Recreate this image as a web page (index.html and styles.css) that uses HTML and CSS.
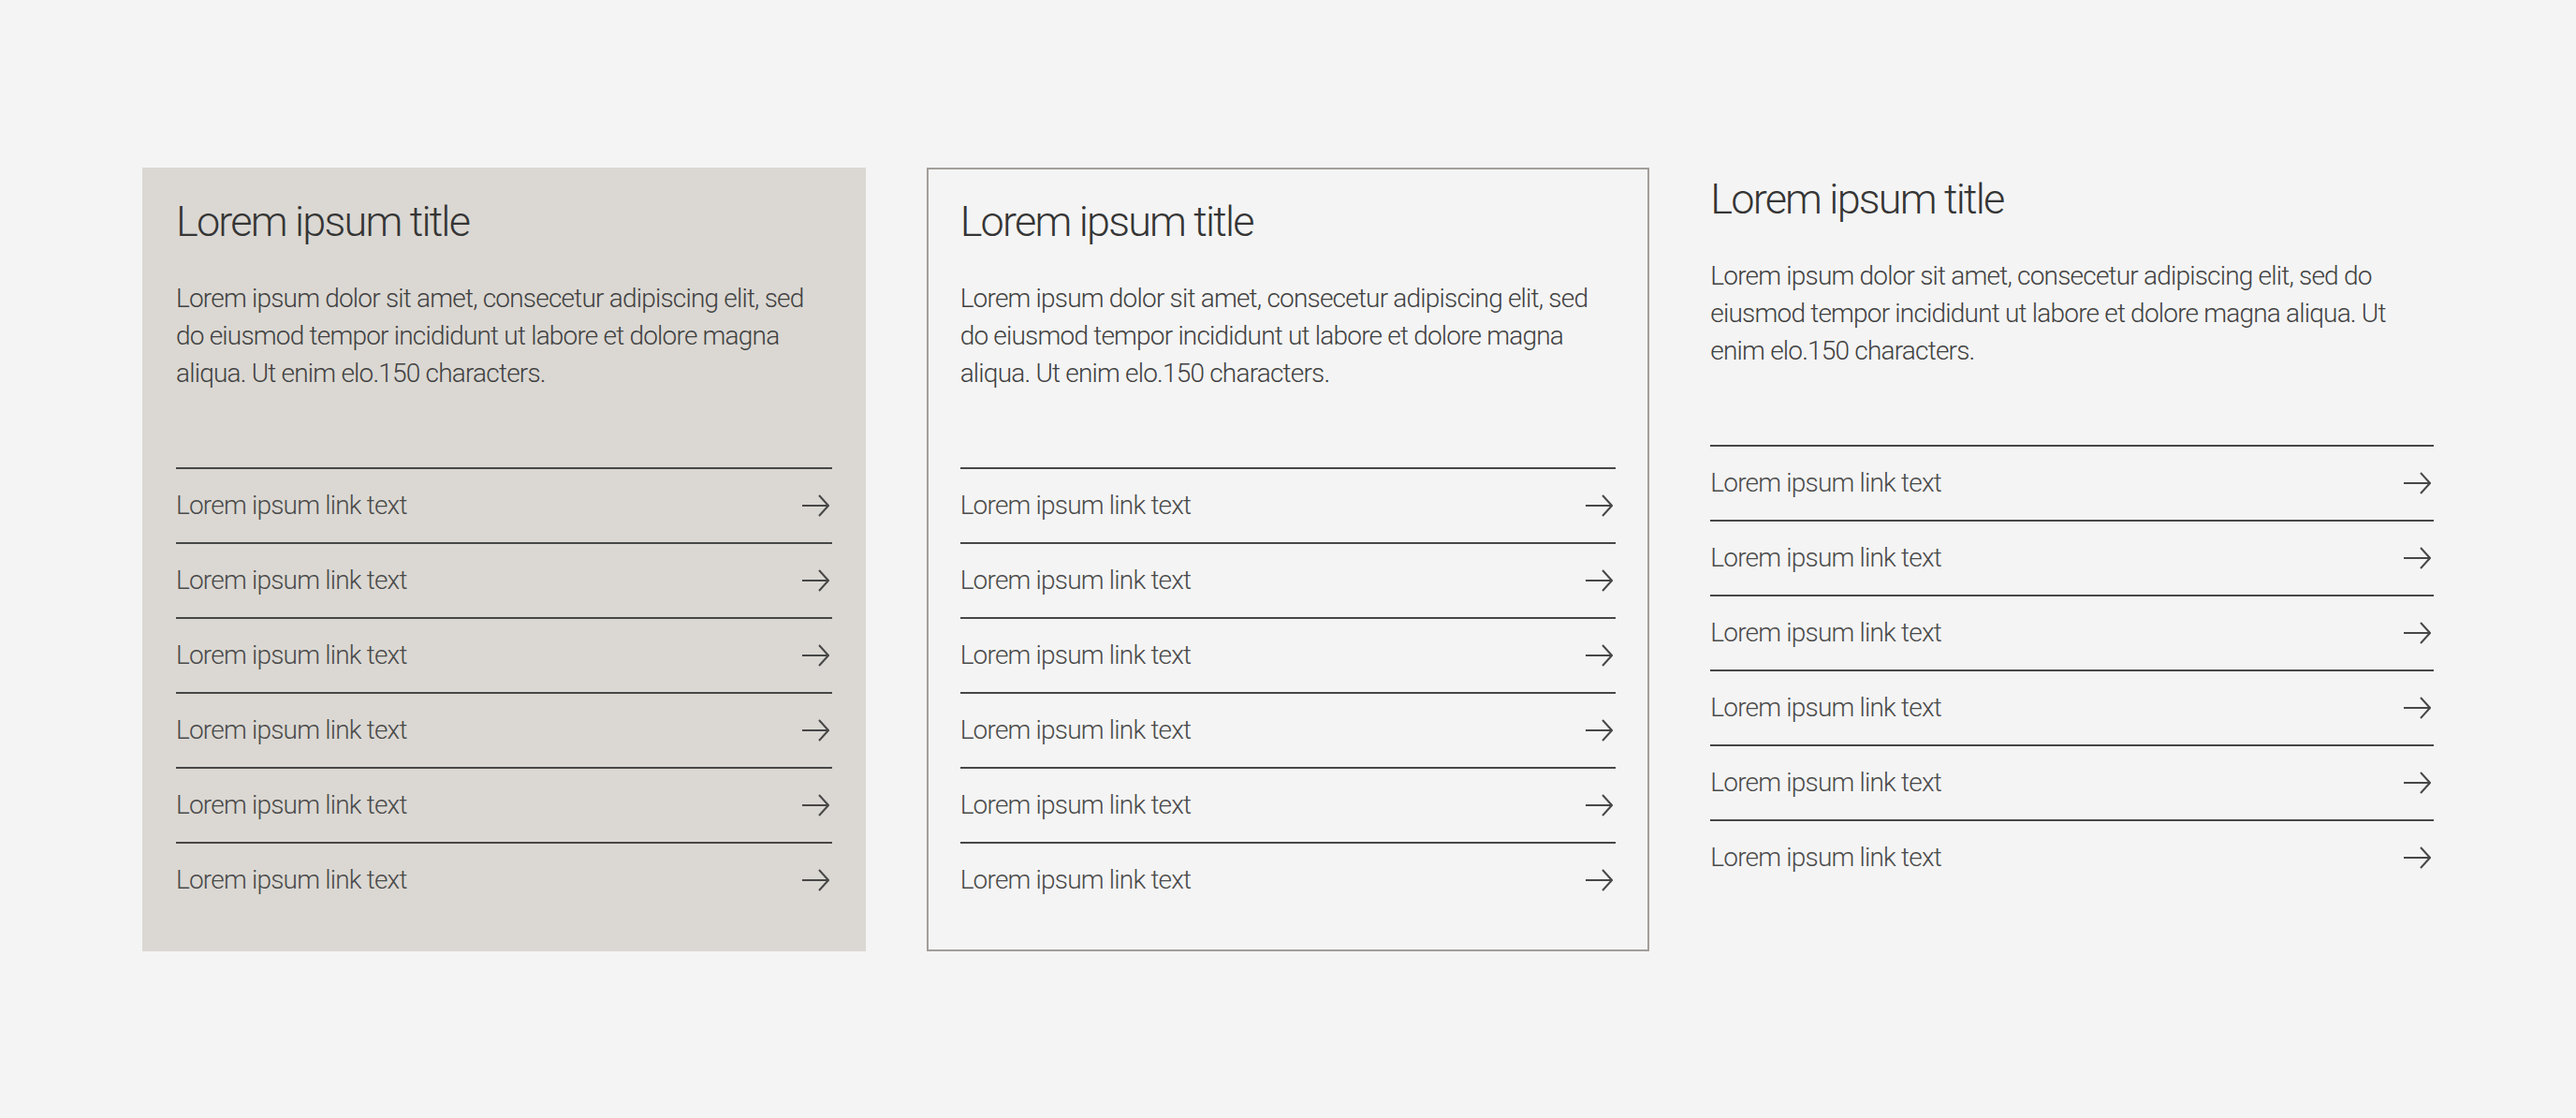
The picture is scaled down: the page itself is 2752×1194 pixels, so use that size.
FILE: index.html
```html
<!DOCTYPE html>
<html lang="en">
<head>
    <meta charset="UTF-8">
    <meta name="viewport" content="width=device-width, initial-scale=1.0">
    <title>Link Lists</title>
    <link rel="stylesheet" href="styles.css">
</head>
<body>
    <main class="teasers">
        <section class="teaser teaser-filled">
            <h2 class="teaser-title">Lorem ipsum title</h2>
            <p class="teaser-text">Lorem ipsum dolor sit amet, consecetur adipiscing elit, sed do eiusmod tempor incididunt ut labore et dolore magna aliqua. Ut enim elo.150 characters.</p>
            <ul class="link-list">
                <li><a href="#">Lorem ipsum link text<svg class="arrow" viewBox="0 0 30 26"><path d="M1 13h28M19 2l10 11-10 11"/></svg></a></li>
                <li><a href="#">Lorem ipsum link text<svg class="arrow" viewBox="0 0 30 26"><path d="M1 13h28M19 2l10 11-10 11"/></svg></a></li>
                <li><a href="#">Lorem ipsum link text<svg class="arrow" viewBox="0 0 30 26"><path d="M1 13h28M19 2l10 11-10 11"/></svg></a></li>
                <li><a href="#">Lorem ipsum link text<svg class="arrow" viewBox="0 0 30 26"><path d="M1 13h28M19 2l10 11-10 11"/></svg></a></li>
                <li><a href="#">Lorem ipsum link text<svg class="arrow" viewBox="0 0 30 26"><path d="M1 13h28M19 2l10 11-10 11"/></svg></a></li>
                <li><a href="#">Lorem ipsum link text<svg class="arrow" viewBox="0 0 30 26"><path d="M1 13h28M19 2l10 11-10 11"/></svg></a></li>
            </ul>
        </section>

        <section class="teaser teaser-outline">
            <h2 class="teaser-title">Lorem ipsum title</h2>
            <p class="teaser-text">Lorem ipsum dolor sit amet, consecetur adipiscing elit, sed do eiusmod tempor incididunt ut labore et dolore magna aliqua. Ut enim elo.150 characters.</p>
            <ul class="link-list">
                <li><a href="#">Lorem ipsum link text<svg class="arrow" viewBox="0 0 30 26"><path d="M1 13h28M19 2l10 11-10 11"/></svg></a></li>
                <li><a href="#">Lorem ipsum link text<svg class="arrow" viewBox="0 0 30 26"><path d="M1 13h28M19 2l10 11-10 11"/></svg></a></li>
                <li><a href="#">Lorem ipsum link text<svg class="arrow" viewBox="0 0 30 26"><path d="M1 13h28M19 2l10 11-10 11"/></svg></a></li>
                <li><a href="#">Lorem ipsum link text<svg class="arrow" viewBox="0 0 30 26"><path d="M1 13h28M19 2l10 11-10 11"/></svg></a></li>
                <li><a href="#">Lorem ipsum link text<svg class="arrow" viewBox="0 0 30 26"><path d="M1 13h28M19 2l10 11-10 11"/></svg></a></li>
                <li><a href="#">Lorem ipsum link text<svg class="arrow" viewBox="0 0 30 26"><path d="M1 13h28M19 2l10 11-10 11"/></svg></a></li>
            </ul>
        </section>

        <section class="teaser teaser-plain">
            <h2 class="teaser-title">Lorem ipsum title</h2>
            <p class="teaser-text">Lorem ipsum dolor sit amet, consecetur adipiscing elit, sed do eiusmod tempor incididunt ut labore et dolore magna aliqua. Ut enim elo.150 characters.</p>
            <ul class="link-list">
                <li><a href="#">Lorem ipsum link text<svg class="arrow" viewBox="0 0 30 26"><path d="M1 13h28M19 2l10 11-10 11"/></svg></a></li>
                <li><a href="#">Lorem ipsum link text<svg class="arrow" viewBox="0 0 30 26"><path d="M1 13h28M19 2l10 11-10 11"/></svg></a></li>
                <li><a href="#">Lorem ipsum link text<svg class="arrow" viewBox="0 0 30 26"><path d="M1 13h28M19 2l10 11-10 11"/></svg></a></li>
                <li><a href="#">Lorem ipsum link text<svg class="arrow" viewBox="0 0 30 26"><path d="M1 13h28M19 2l10 11-10 11"/></svg></a></li>
                <li><a href="#">Lorem ipsum link text<svg class="arrow" viewBox="0 0 30 26"><path d="M1 13h28M19 2l10 11-10 11"/></svg></a></li>
                <li><a href="#">Lorem ipsum link text<svg class="arrow" viewBox="0 0 30 26"><path d="M1 13h28M19 2l10 11-10 11"/></svg></a></li>
            </ul>
        </section>
    </main>
</body>
</html>
```

FILE: styles.css
```css
:root {
    --page-bg: #f4f4f4;
    --card-bg: #dbd8d3;
    --border-color: #a29e99;
    --text-dark: #353535;
    --text-body: #414141;
    --text-link: #4a4a4a;
    --line-color: #474747;
}

* {
    margin: 0;
    padding: 0;
    box-sizing: border-box;
}

body {
    background-color: var(--page-bg);
    font-family: Roboto, "Noto Sans", sans-serif;
    font-weight: 300;
    color: var(--text-body);
    min-height: 100vh;
    display: flex;
    align-items: center;
}

.teasers {
    width: 100%;
    padding: 0 152px;
    display: grid;
    grid-template-columns: repeat(3, 1fr);
    gap: 65px;
    align-items: start;
}

.teaser {
    padding: 28px 36px 37px;
}

.teaser-filled {
    background-color: var(--card-bg);
}

.teaser-outline {
    border: 2px solid var(--border-color);
    padding: 26px 34px 35px;
}

.teaser-plain {
    padding: 4px 0 0;
}

.teaser-title {
    font-size: 45px;
    line-height: 60px;
    font-weight: 300;
    letter-spacing: -1.8px;
    color: var(--text-dark);
}

.teaser-text {
    margin-top: 32px;
    font-size: 28px;
    line-height: 40px;
    letter-spacing: -0.8px;
}

.link-list {
    list-style: none;
    margin-top: 80px;
}

.link-list li {
    border-top: 2px solid var(--line-color);
}

.link-list a {
    display: flex;
    justify-content: space-between;
    align-items: center;
    height: 78px;
    font-size: 28px;
    letter-spacing: -0.8px;
    color: var(--text-link);
    text-decoration: none;
}

.arrow {
    width: 30px;
    height: 26px;
    margin-right: 3px;
    fill: none;
    stroke: var(--line-color);
    stroke-width: 2;
}
```
